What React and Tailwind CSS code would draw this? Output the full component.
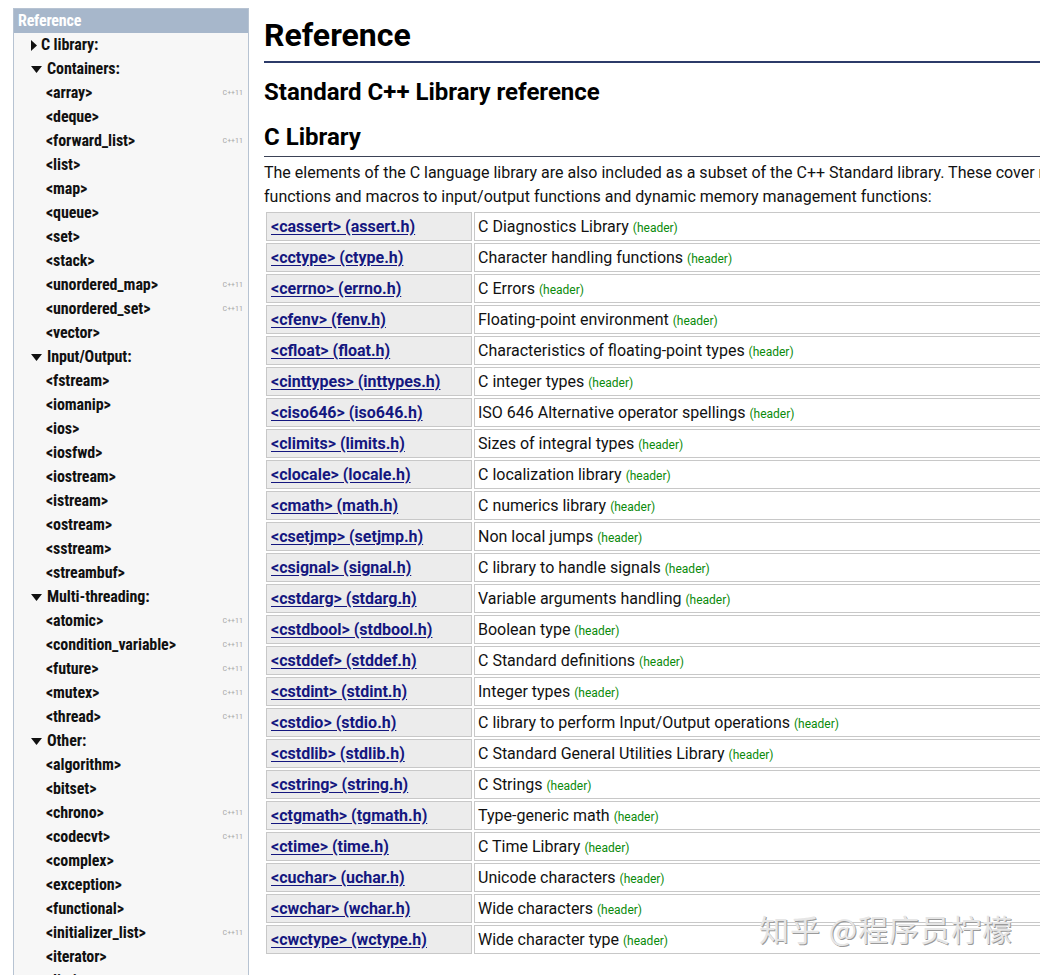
import React from 'react';

const groups = [
  { label: 'C library:', open: false, items: [] },
  {
    label: 'Containers:', open: true,
    items: [
      ['<array>', true], ['<deque>'], ['<forward_list>', true], ['<list>'], ['<map>'], ['<queue>'],
      ['<set>'], ['<stack>'], ['<unordered_map>', true], ['<unordered_set>', true], ['<vector>'],
    ],
  },
  {
    label: 'Input/Output:', open: true,
    items: [
      ['<fstream>'], ['<iomanip>'], ['<ios>'], ['<iosfwd>'], ['<iostream>'], ['<istream>'],
      ['<ostream>'], ['<sstream>'], ['<streambuf>'],
    ],
  },
  {
    label: 'Multi-threading:', open: true,
    items: [
      ['<atomic>', true], ['<condition_variable>', true], ['<future>', true], ['<mutex>', true], ['<thread>', true],
    ],
  },
  {
    label: 'Other:', open: true,
    items: [
      ['<algorithm>'], ['<bitset>'], ['<chrono>', true], ['<codecvt>', true], ['<complex>'], ['<exception>'],
      ['<functional>'], ['<initializer_list>', true], ['<iterator>'], ['<limits>'],
    ],
  },
];

const headers = [
  ['<cassert> (assert.h)', 'C Diagnostics Library'],
  ['<cctype> (ctype.h)', 'Character handling functions'],
  ['<cerrno> (errno.h)', 'C Errors'],
  ['<cfenv> (fenv.h)', 'Floating-point environment'],
  ['<cfloat> (float.h)', 'Characteristics of floating-point types'],
  ['<cinttypes> (inttypes.h)', 'C integer types'],
  ['<ciso646> (iso646.h)', 'ISO 646 Alternative operator spellings'],
  ['<climits> (limits.h)', 'Sizes of integral types'],
  ['<clocale> (locale.h)', 'C localization library'],
  ['<cmath> (math.h)', 'C numerics library'],
  ['<csetjmp> (setjmp.h)', 'Non local jumps'],
  ['<csignal> (signal.h)', 'C library to handle signals'],
  ['<cstdarg> (stdarg.h)', 'Variable arguments handling'],
  ['<cstdbool> (stdbool.h)', 'Boolean type'],
  ['<cstddef> (stddef.h)', 'C Standard definitions'],
  ['<cstdint> (stdint.h)', 'Integer types'],
  ['<cstdio> (stdio.h)', 'C library to perform Input/Output operations'],
  ['<cstdlib> (stdlib.h)', 'C Standard General Utilities Library'],
  ['<cstring> (string.h)', 'C Strings'],
  ['<ctgmath> (tgmath.h)', 'Type-generic math'],
  ['<ctime> (time.h)', 'C Time Library'],
  ['<cuchar> (uchar.h)', 'Unicode characters'],
  ['<cwchar> (wchar.h)', 'Wide characters'],
  ['<cwctype> (wctype.h)', 'Wide character type'],
];

function Triangle({ open }) {
  if (open) {
    return (
      <svg width="11" height="7" viewBox="0 0 11 7" className="mr-[5px]">
        <path d="M0 0 L11 0 L5.5 7 Z" fill="#111" />
      </svg>
    );
  }
  return (
    <svg width="6" height="11" viewBox="0 0 6 11" className="mr-[4px]">
      <path d="M0 0 L6 5.5 L0 11 Z" fill="#111" />
    </svg>
  );
}

function Sidebar() {
  return (
    <div className="ml-[13px] mt-[8px] w-[236px] shrink-0 border border-[#b7c3d2] bg-[#f7f7f7] min-h-[1000px] font-['Roboto',sans-serif] [font-stretch:condensed]">
      <div className="h-[24px] bg-[#a7b7cb] px-[4px] text-[16px] font-bold leading-[23px] tracking-[-0.2px] text-white">
        Reference
      </div>
      {groups.map((g) => (
        <div key={g.label}>
          <div className="flex h-[24px] items-center pl-[17px] text-[16px] font-bold tracking-[-0.1px] text-[#111]">
            <Triangle open={g.open} />
            <span>{g.label}</span>
          </div>
          {g.items.map(([name, cpp11]) => (
            <div key={name} className="flex h-[24px] items-center justify-between pl-[32px] pr-[5px] text-[16px] font-bold tracking-[-0.1px] text-[#111]">
              <span>{name}</span>
              {cpp11 && <span className="text-[8px] font-normal tracking-normal text-[#a8a8a8]">C++11</span>}
            </div>
          ))}
        </div>
      ))}
    </div>
  );
}

function Main() {
  return (
    <div className="ml-[15px] w-[1000px] shrink-0 font-['Roboto',sans-serif] text-[#111]">
      <h1 className="mt-[15px] text-[32px] font-bold leading-[40px] text-black">Reference</h1>
      <div className="mt-[6px] h-[2px] bg-[#2c3b69]" />
      <h2 className="mt-[14px] text-[24px] font-bold leading-[30px] text-black">Standard C++ Library reference</h2>
      <h3 className="mt-[15px] text-[24px] font-bold leading-[30px] text-black">C Library</h3>
      <div className="mt-[4px] h-px bg-[#3b4256]" />
      <p className="mt-[4px] text-[16px] leading-[24px] whitespace-nowrap">
        The elements of the C language library are also included as a subset of the C++ Standard library. These cover many aspects, from general utility
        <br />
        functions and macros to input/output functions and dynamic memory management functions:
      </p>
      <table className="mt-[1px] w-[900px] border-separate border-spacing-[2px]">
        <tbody>
          {headers.map(([h, d]) => (
            <tr key={h}>
              <td className="h-[29px] w-[206px] border border-[#c8c8c8] bg-[#ececec] px-[4px] py-0 text-[16px] font-bold">
                <a href="#" className="text-[#14177f] underline underline-offset-2">{h}</a>
              </td>
              <td className="h-[29px] border border-[#c8c8c8] bg-white px-[3px] py-0 text-[16px]">
                {d} <span className="text-[12px] text-[#0a8a0a]">(header)</span>
              </td>
            </tr>
          ))}
        </tbody>
      </table>
    </div>
  );
}

export default function App() {
  return (
    <div className="relative h-[975px] w-[1040px] overflow-hidden bg-white">
      <div className="flex">
        <Sidebar />
        <Main />
      </div>
      <div className="absolute left-[759px] top-[908px] font-['Noto_Sans_CJK_SC',sans-serif] text-[30px] leading-[40px] tracking-[1px] text-[#e6e6e6] [text-shadow:1px_1px_0_#9a9a9a]">
        知乎 @程序员柠檬
      </div>
    </div>
  );
}
